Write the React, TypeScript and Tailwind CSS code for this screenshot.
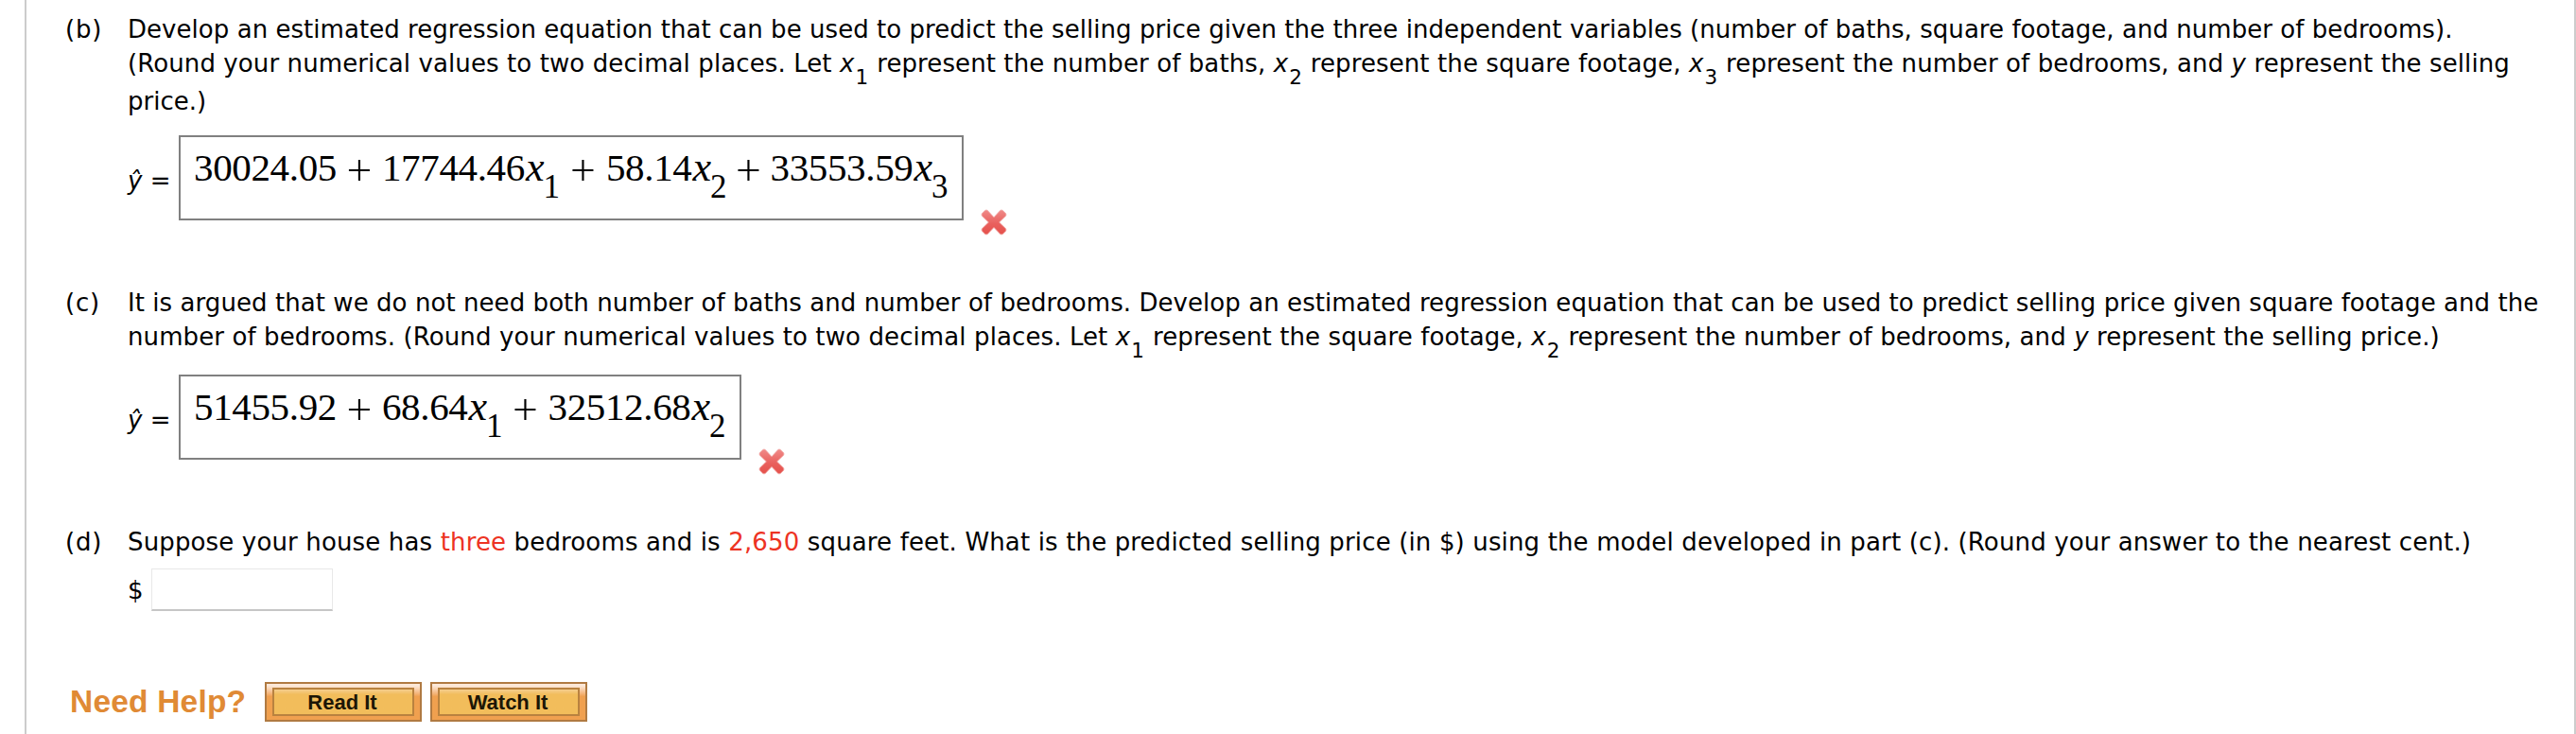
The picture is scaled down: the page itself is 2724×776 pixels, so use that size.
import React from 'react';

const Var = ({ name, sub }: { name: string; sub?: string }) => (
  <>
    <i>{name}</i>
    {sub && (
      <sub className="relative bottom-auto top-[13px] ml-px mr-[0.5px] align-baseline text-[21.5px] leading-none">
        {sub}
      </sub>
    )}
  </>
);

const Line = ({ className = '', children }: { className?: string; children: React.ReactNode }) => (
  <p className={`h-9 whitespace-nowrap leading-9 ${className}`}>{children}</p>
);

const Part = ({
  label,
  className,
  children,
}: {
  label: string;
  className: string;
  children: React.ReactNode;
}) => (
  <section className={`flex ${className}`}>
    <div className="w-[66px] shrink-0 leading-9 tracking-[0.8px]">{label}</div>
    <div>{children}</div>
  </section>
);

const WrongMark = () => (
  <svg viewBox="0 0 28 28" className="mt-[78px] ml-[18px] h-7 w-7 shrink-0">
    <defs>
      <linearGradient id="wrong" x1="0" y1="0" x2="0" y2="1">
        <stop offset="0" stopColor="#f08a88" />
        <stop offset="0.55" stopColor="#e9615e" />
        <stop offset="1" stopColor="#e5504b" />
      </linearGradient>
    </defs>
    <path
      d="M5 1.2 H7 L14 8.8 L21 1.2 H23 L26.8 5 V7 L19.6 14 L26.8 21 V23 L23 26.8 H21 L14 19.4 L7 26.8 H5 L1.2 23 V21 L8.4 14 L1.2 7 V5 Z"
      fill="url(#wrong)"
      stroke="#f0a09d"
      strokeWidth="0.8"
      strokeLinejoin="round"
    />
  </svg>
);

type Term = { coef: string; sub?: string; plus?: string };

const bTerms: Term[] = [
  { coef: '30024.05' },
  { coef: '17744.46', sub: '1', plus: 'w-[48px]' },
  { coef: '58.14', sub: '2', plus: 'w-[49px]' },
  { coef: '33553.59', sub: '3', plus: 'w-[46px]' },
];

const cTerms: Term[] = [
  { coef: '51455.92' },
  { coef: '68.64', sub: '1', plus: 'w-[48px]' },
  { coef: '32512.68', sub: '2', plus: 'w-[48px]' },
];

const Equation = ({ terms, className }: { terms: Term[]; className: string }) => (
  <div className="flex h-[90px]">
    <div className="w-[54px] shrink-0 whitespace-nowrap pt-[30px] leading-9">
      <i>ŷ</i> =
    </div>
    <div
      className={`flex h-[90px] shrink-0 items-baseline border-2 border-[#808080] pl-[14px] pt-[2px] font-['Liberation_Serif',serif] text-[41px] leading-[48px] ${className}`}
    >
      {terms.map((term) => (
        <React.Fragment key={term.coef}>
          {term.plus && (
            <span
              className={`relative top-[4px] flex justify-center font-['Inter',sans-serif] text-[51px] font-extralight leading-none ${term.plus}`}
            >
              +
            </span>
          )}
          <span className="tracking-[-0.35px]">{term.coef}</span>
          {term.sub && (
            <>
              <i className="ml-px text-[44px] leading-none">x</i>
              <span className="relative top-[18px] -ml-px text-[35px] leading-none">{term.sub}</span>
            </>
          )}
        </React.Fragment>
      ))}
    </div>
    <WrongMark />
  </div>
);

const HelpButton = ({ label }: { label: string }) => (
  <button className="h-[42px] w-[166px] border-2 border-[#b07a42] bg-linear-to-b from-[#fce9d9] from-5% via-[#f0a04f] via-35% to-[#f0a04f] px-1.5 py-1">
    <span className="flex h-full items-center justify-center border-2 border-[#b9823f] bg-linear-to-b from-[#f5cd8c] to-[#f2bd5b] to-20% pt-0.5 pr-0.5 font-['Liberation_Sans',Arial,sans-serif] text-[22px] font-bold leading-none text-[#1c1606]">
      {label}
    </span>
  </button>
);

export default function App() {
  return (
    <div className="h-[776px] w-[2724px] overflow-hidden bg-white pl-[26px] font-['DejaVu_Sans',Verdana,sans-serif] text-[26px] text-black">
      <div className="h-full w-[2698px] border-x-2 border-[#ccc] pl-[41px] pt-[13px]">
        <Part label="(b)" className="h-[289px]">
          <Line className="tracking-[0.045px]">
            Develop an estimated regression equation that can be used to predict the selling price given the three
            independent variables (number of baths, square footage, and number of bedrooms).
          </Line>
          <Line className="tracking-[0.1px]">
            (Round your numerical values to two decimal places. Let <Var name="x" sub="1" /> represent the number of
            baths, <Var name="x" sub="2" /> represent the square footage, <Var name="x" sub="3" /> represent the number
            of bedrooms, and <Var name="y" /> represent the selling
          </Line>
          <Line className="mt-1 mb-[18px]">price.)</Line>
          <Equation terms={bTerms} className="w-[830px]" />
        </Part>

        <Part label="(c)" className="h-[253px]">
          <Line className="tracking-[0.065px]">
            It is argued that we do not need both number of baths and number of bedrooms. Develop an estimated
            regression equation that can be used to predict selling price given square footage and the
          </Line>
          <Line className="mb-[22px] tracking-[0.105px]">
            number of bedrooms. (Round your numerical values to two decimal places. Let <Var name="x" sub="1" />{' '}
            represent the square footage, <Var name="x" sub="2" /> represent the number of bedrooms, and{' '}
            <Var name="y" /> represent the selling price.)
          </Line>
          <Equation terms={cTerms} className="w-[595px]" />
        </Part>

        <Part label="(d)" className="h-[166px]">
          <Line className="tracking-[0.145px]">
            Suppose your house has <span className="text-[#ed3323]">three</span> bedrooms and is{' '}
            <span className="text-[#ed3323]">2,650</span> square feet. What is the predicted selling price (in $) using
            the model developed in part (c). (Round your answer to the nearest cent.)
          </Line>
          <div className="mt-2.5 flex h-[45px]">
            <span className="w-[25px] pt-[5px] leading-9">$</span>
            <input
              type="text"
              className="h-[45px] w-[192px] border border-b-2 border-[#e8e8e8] border-b-[#c6c6c6] bg-white px-2"
            />
          </div>
        </Part>

        <div className="flex gap-[9px] pl-1">
          <span className="w-[198px] whitespace-nowrap pt-[3px] pl-px font-['Liberation_Sans',Arial,sans-serif] text-[33.5px] font-bold leading-9 tracking-[0.2px] text-[#e08a35]">
            Need Help?
          </span>
          <HelpButton label="Read It" />
          <HelpButton label="Watch It" />
        </div>
      </div>
    </div>
  );
}
